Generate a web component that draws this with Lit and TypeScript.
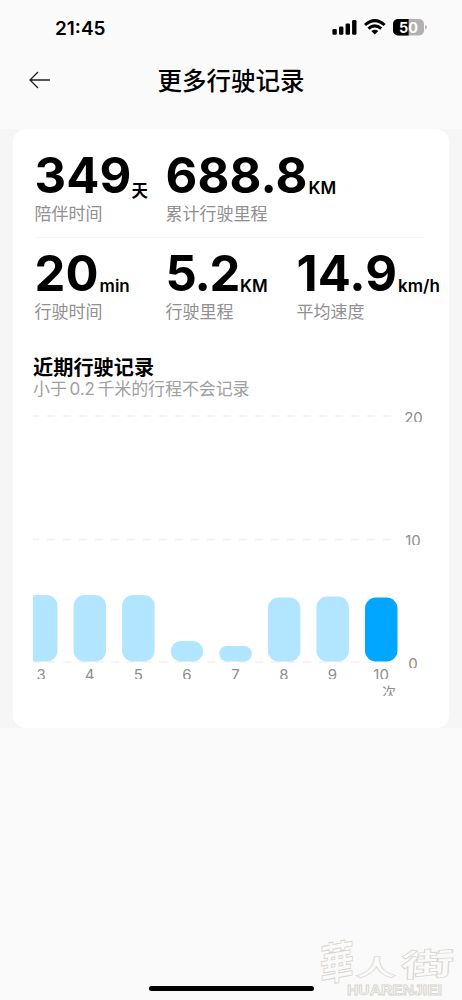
import { LitElement, html, svg, css } from "lit";
import { customElement, property } from "lit/decorators.js";

const fonts = css`Inter, "Noto Sans CJK SC", sans-serif`;

@customElement("status-bar")
class StatusBar extends LitElement {
  static styles = css`
    :host { display: flex; justify-content: space-between; align-items: center; height: 54px; padding: 0 35px 0 55px; box-sizing: border-box; font-family: ${fonts}; }
    .time { font-size: 19px; line-height: 24px; font-weight: 600; letter-spacing: 0; padding-top: 3px; }
    svg { display: block; }
    .level { font: 700 14.5px Inter, sans-serif; }
  `;
  render() {
    return html`
      <div class="time">21:45</div>
      <svg width="96" height="20" viewBox="0 0 96 20">
        <rect x="1.4" y="12" width="4.4" height="5.8" rx="1.3" />
        <rect x="8" y="9.5" width="4.4" height="8.3" rx="1.3" />
        <rect x="14.6" y="6.5" width="4.4" height="11.3" rx="1.3" />
        <rect x="21.1" y="3" width="4.4" height="14.8" rx="1.3" />
        <g fill="none" stroke="#000" stroke-width="3">
          <path d="M34 8Q43.8-.8 53.6 8" />
          <path d="M37.4 11.6Q43.8 6.1 50.2 11.6" />
        </g>
        <path d="M40.3 14Q43.8 11.4 47.3 14L43.8 17.6Z" />
        <clipPath id="shell"><rect x="62" y="2" width="31" height="16.4" rx="5" /></clipPath>
        <g clip-path="url(#shell)">
          <rect x="62" y="2" width="31" height="17" fill="#b1b1b1" />
          <rect x="62" y="2" width="15.6" height="17" />
        </g>
        <path d="M94.2 7.7Q95.9 8.4 95.9 10.2T94.2 12.7Z" fill="#b1b1b1" />
        <text class="level" x="77.5" y="15.5" text-anchor="middle" fill="#fff">50</text>
      </svg>
    `;
  }
}

@customElement("stat-item")
class StatItem extends LitElement {
  @property() value = "";
  @property() unit = "";
  @property() label = "";
  static styles = css`
    :host { display: block; white-space: nowrap; font-family: ${fonts}; }
    .figure { display: flex; align-items: baseline; height: 56px; line-height: 58px; }
    .value { font-size: 49px; font-weight: 700; letter-spacing: 0.1px; margin-left: -0.5px; }
    .value.tight { letter-spacing: -1.3px; }
    .unit { font-size: 17px; font-weight: 600; margin-left: 1px; position: relative; top: 1px; }
    .unit.cjk { font-size: 16.5px; font-weight: 700; top: 4px; margin-left: 0; }
    .label { font-size: 17px; line-height: 22px; padding-bottom: 2px; font-weight: 400; color: #909090; margin-left: -0.5px; }
  `;
  render() {
    return html`
      <div class="figure">
        <span class="value ${this.value === "5.2" ? "tight" : ""}">${this.value}</span>
        <span class="unit ${this.unit === "天" ? "cjk" : ""}">${this.unit}</span>
      </div>
      <div class="label">${this.label}</div>
    `;
  }
}

@customElement("trip-chart")
class TripChart extends LitElement {
  trips = [
    { n: 3, top: 187 }, { n: 4, top: 187 }, { n: 5, top: 187 }, { n: 6, top: 233 },
    { n: 7, top: 238 }, { n: 8, top: 189.5 }, { n: 9, top: 188.5 }, { n: 10, top: 189.5 },
  ];
  static styles = css`
    :host { display: block; }
    svg { display: block; }
    text { font: 400 15px ${fonts}; fill: #8e8e8e; text-anchor: middle; }
    .unit { font-size: 14px; }
    .grid { stroke: #f1f1f1; stroke-width: 1.4; stroke-dasharray: 8 8; }
    .bar { fill: #b2e5ff; }
    .bar.current { fill: #00a6ff; }
  `;
  render() {
    return svg`<svg width="400" height="300" viewBox="0 0 400 300">
      <clipPath id="plot"><rect width="366" height="271" /></clipPath>
      <clipPath id="y20"><rect x="366" width="34" height="14" /></clipPath>
      <clipPath id="y10"><rect x="366" y="120" width="34" height="17" /></clipPath>
      <clipPath id="y0"><rect x="366" y="240" width="34" height="20" /></clipPath>
      <clipPath id="foot"><rect y="272" width="366" height="16" /></clipPath>
      <path class="grid" d="M-2 8H364M-2 131.5H364M-2 254H364" />
      <g clip-path="url(#plot)">
        ${this.trips.map((t, i) => svg`
          <rect class="bar ${t.n === 10 ? "current" : ""}" x=${-8 + i * 48.57} y=${t.top} width="32.5" height=${253.5 - t.top} rx=${Math.min(11, (253.5 - t.top) / 2)} />
          <text x=${8.1 + i * 48.57} y="272.3">${t.n}</text>`)}
      </g>
      <g clip-path="url(#y20)"><text x="380.5" y="15.2">20</text></g>
      <g clip-path="url(#y10)"><text x="380" y="138.2">10</text></g>
      <g clip-path="url(#y0)"><text x="380" y="260.5">0</text></g>
      <g clip-path="url(#foot)"><text class="unit" x="356" y="288.5">次</text></g>
    </svg>`;
  }
}

@customElement("app-root")
class AppRoot extends LitElement {
  static styles = css`
    :host { display: block; position: relative; height: 1000px; overflow: hidden; background: #fafafa; color: #000; font-family: ${fonts}; }
    .nav { display: grid; grid-template-columns: 60px 1fr 60px; align-items: center; height: 53px; }
    .back { display: block; margin-left: 28px; }
    .title { text-align: center; font-size: 24.5px; line-height: 36px; font-weight: 500; margin: 0; }
    .band { margin-top: 22px; padding: 0 13px; background: #f6f6f6; }
    .card { height: 599px; box-sizing: border-box; border-radius: 13px; background: #fff; padding: 18px 16px 0 20px; }
    .row { display: grid; grid-template-columns: 131px 131px 1fr; padding-left: 2px; }
    .rule { height: 1px; background: #f5f5f5; margin: 10px 8px 7px 2px; }
    .heading { margin: 31px 0 0; font-size: 20.2px; line-height: 24px; font-weight: 700; }
    .hint { margin: -3px 0 0; font-size: 17px; line-height: 24px; font-weight: 400; color: #a0a0a0; word-spacing: -2px; letter-spacing: -0.1px; }
    .chart { margin-top: 7px; display: block; }
    .home { position: absolute; left: 149px; bottom: 9px; width: 165px; height: 5px; border-radius: 3px; background: #000; }
    .mark { position: absolute; right: 0; bottom: 0; overflow: visible; }
    .script { font: 700 42px "Noto Sans CJK SC", sans-serif; }
    .latin { font: 700 14px "Liberation Sans", sans-serif; }
  `;
  render() {
    return html`
      <status-bar></status-bar>
      <header class="nav">
        <svg class="back" width="24" height="22" viewBox="0 0 24 22" fill="none" stroke="#222" stroke-width="1.3">
          <path d="M22 10H2.3M10 2L2 10L10 18" />
        </svg>
        <h1 class="title">更多行驶记录</h1>
      </header>
      <main class="band">
        <section class="card">
          <div class="row">
            <stat-item value="349" unit="天" label="陪伴时间"></stat-item>
            <stat-item value="688.8" unit="KM" label="累计行驶里程"></stat-item>
          </div>
          <div class="rule"></div>
          <div class="row">
            <stat-item value="20" unit="min" label="行驶时间"></stat-item>
            <stat-item value="5.2" unit="KM" label="行驶里程"></stat-item>
            <stat-item value="14.9" unit="km/h" label="平均速度"></stat-item>
          </div>
          <h2 class="heading">近期行驶记录</h2>
          <p class="hint">小于 0.2 千米的行程不会记录</p>
          <trip-chart class="chart"></trip-chart>
        </section>
      </main>
      <div class="home"></div>
      <svg class="mark" width="152" height="70" viewBox="0 0 152 70" fill="#fafafa" stroke="#d8d5cf" stroke-width="0.9">
        <g class="script">
          <text transform="translate(10 52) rotate(-10) skewX(-10) scale(.82 1.04)">華</text>
          <text transform="translate(45 46) skewX(-6) scale(.98 .55)">人</text>
          <text transform="translate(90 47) rotate(-3) skewX(-6) scale(1.28 .74)">街</text>
        </g>
        <text class="latin" x="37" y="65" textLength="95" lengthAdjust="spacingAndGlyphs">HUARENJIEI</text>
      </svg>
    `;
  }
}
